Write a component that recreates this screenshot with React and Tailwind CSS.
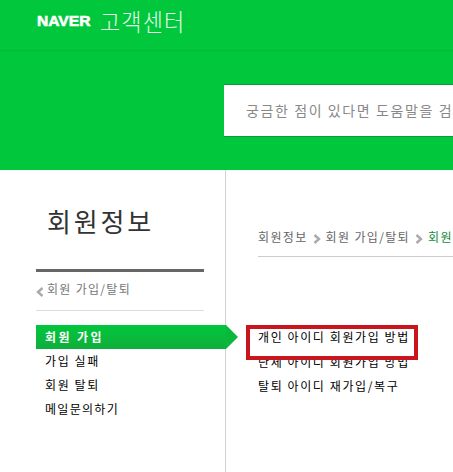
function Chevron({ className, dir = "right" }) {
  return (
    <svg viewBox="0 0 8 10" className={className} fill="none" stroke="currentColor" strokeWidth="2.4">
      {dir === "right" ? <path d="M1.5 1 L6 5 L1.5 9" /> : <path d="M6.5 1 L2 5 L6.5 9" />}
    </svg>
  );
}

export default function App() {
  const base = "font-['Noto_Sans_CJK_KR','Liberation_Sans',sans-serif]";
  return (
    <div className={`${base} w-[453px] h-[472px] overflow-hidden bg-white relative`}>
      <header className="h-[170px] bg-[#00c73c] flex flex-col">
        <div className="h-[51px] shrink-0 border-b border-[#0ab73c] pl-[37px] pb-[10px] flex items-center">
          <span className="font-['Liberation_Sans',sans-serif] font-black text-[15px] leading-none text-white [transform:scaleX(1.04)] origin-left w-[63px] [-webkit-text-stroke:0.6px_white]">NAVER</span>
          <span className="text-[22px] leading-none text-[#e6fbec] font-light tracking-[1.1px] [transform:scaleY(1.1)]">고객센터</span>
        </div>
        <div className="pl-[224px] pt-[33px] overflow-hidden">
          <div className="w-[400px] h-[53px] bg-white border-y border-[#0a9a3a] pl-[22px] flex items-center">
            <span className="text-[14px] text-[#888888] whitespace-nowrap tracking-[1.6px]">궁금한 점이 있다면 도움말을 검색해 보세요</span>
          </div>
        </div>
      </header>

      <div className="flex h-[302px]">
        <aside className="w-[226px] shrink-0 border-r border-[#d2d2d2] pl-[36px]">
          <h1 className="text-[26px] leading-none text-[#333] pl-[11px] pt-[38px] h-[99px] tracking-[2.8px]">회원정보</h1>
          <div className="w-[168px] h-[38px] border-t-[3px] border-[#666666] border-b border-b-[#dddddd] box-content flex items-center gap-[3px]">
            <Chevron dir="left" className="w-[8px] h-[10px] text-[#aaaaaa] mt-[2px]" />
            <span className="text-[12px] leading-none text-[#777] tracking-[1.3px] mt-[-4px]">회원 가입/탈퇴</span>
          </div>
          <nav className="mt-[14px] text-[12px] text-black">
            <div className="relative w-[190px] h-[24px] bg-gradient-to-b from-[#00c73c] to-[#0fae3c] pl-[9px] flex items-center">
              <span className="font-bold text-white tracking-[2.4px]">회원 가입</span>
              <div className="absolute left-full top-0 w-0 h-0 border-y-[12px] border-y-transparent border-l-[12px] border-l-[#0cb83c]" />
            </div>
            <div className="pl-[9px] h-[24px] flex items-center tracking-[1.6px]">가입 실패</div>
            <div className="pl-[9px] h-[24px] flex items-center tracking-[1.6px]">회원 탈퇴</div>
            <div className="pl-[9px] h-[24px] flex items-center tracking-[1.3px]">메일문의하기</div>
          </nav>
        </aside>

        <main className="flex-1 pl-[32px] min-w-0 overflow-hidden">
          <div className="w-[260px] mt-[56px] h-[31px] border-b border-[#cccccc] flex items-start gap-[5px] text-[12px] leading-[22px] whitespace-nowrap tracking-[1.35px] text-[#666]">
            <span>회원정보</span>
            <Chevron className="w-[8px] h-[10px] text-[#aaaaaa] mt-[8px]" />
            <span>회원 가입/탈퇴</span>
            <Chevron className="w-[8px] h-[10px] text-[#aaaaaa] mt-[8px]" />
            <span className="text-[#128a3c]">회원 가입</span>
          </div>
          <ul className="mt-[68px] text-[12px] text-black tracking-[1.6px] whitespace-nowrap">
            <li className="h-[24.5px] leading-[24px]">개인 아이디 회원가입 방법</li>
            <li className="h-[24.5px] leading-[24px]">단체 아이디 회원가입 방법</li>
            <li className="h-[24.5px] leading-[24px]">탈퇴 아이디 재가입/복구</li>
          </ul>
        </main>
      </div>

      <div className="absolute left-[246px] top-[325px] w-[172px] h-[35px] border-[4px] border-[#c9151e]" />
    </div>
  );
}
